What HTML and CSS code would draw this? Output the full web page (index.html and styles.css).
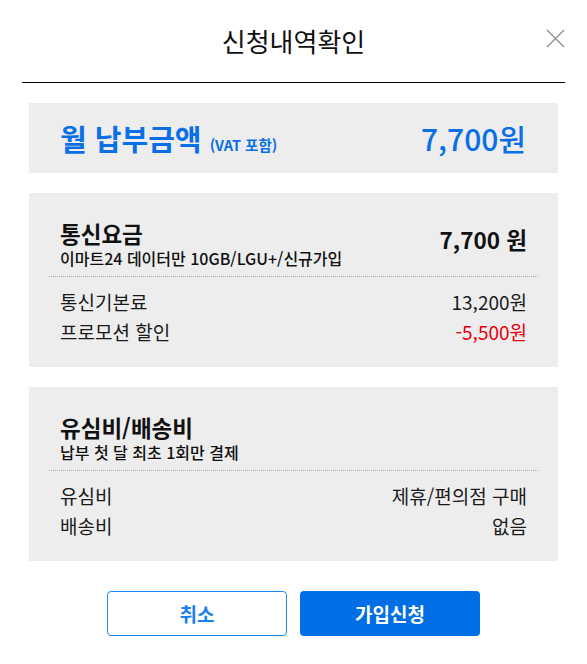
FILE: index.html
```html
<!DOCTYPE html>
<html lang="ko">
<head>
  <meta charset="UTF-8">
  <meta name="viewport" content="width=device-width, initial-scale=1.0">
  <title>신청내역확인</title>
  <link rel="stylesheet" href="styles.css">
</head>
<body>
  <div class="modal">
    <div class="modal-header">
      <h2>신청내역확인</h2>
      <button type="button" class="close-btn" aria-label="닫기">
        <svg width="19" height="19" viewBox="0 0 19 19">
          <path d="M1 1 L18 18 M18 1 L1 18" stroke="#8a8a8a" stroke-width="1.2" fill="none"/>
        </svg>
      </button>
    </div>

    <div class="total-box">
      <div class="total-label">월 납부금액 <span class="vat">(VAT 포함)</span></div>
      <div class="total-price">7,700원</div>
    </div>

    <div class="detail-box">
      <div class="detail-head">
        <div>
          <div class="detail-title">통신요금</div>
          <div class="detail-sub">이마트24 데이터만 10GB/LGU+/신규가입</div>
        </div>
        <div class="detail-price">7,700 원</div>
      </div>
      <ul class="detail-rows">
        <li><span>통신기본료</span><span>13,200원</span></li>
        <li><span>프로모션 할인</span><span class="minus">-5,500원</span></li>
      </ul>
    </div>

    <div class="detail-box">
      <div class="detail-head">
        <div>
          <div class="detail-title">유심비/배송비</div>
          <div class="detail-sub">납부 첫 달 최초 1회만 결제</div>
        </div>
      </div>
      <ul class="detail-rows">
        <li><span>유심비</span><span>제휴/편의점 구매</span></li>
        <li><span>배송비</span><span>없음</span></li>
      </ul>
    </div>

    <div class="button-container">
      <button type="button" class="btn-cancel">취소</button>
      <button type="button" class="btn-apply">가입신청</button>
    </div>
  </div>
</body>
</html>
```

FILE: styles.css
```css
body {
  margin: 0;
  font-family: "Noto Sans CJK KR", "Noto Sans", sans-serif;
  color: #111;
  background: #fff;
}
.modal {
  width: 543px;
  margin: 0 auto;
}
.modal-header {
  position: relative;
  height: 82px;
  border-bottom: 1px solid #000;
  text-align: center;
}
.modal-header h2 {
  margin: 0;
  padding-top: 24px;
  font-size: 26px;
  font-weight: 400;
  line-height: 34px;
}
.close-btn {
  position: absolute;
  top: 29px;
  right: 0;
  padding: 0;
  border: none;
  background: none;
  cursor: pointer;
  line-height: 0;
}
.total-box {
  display: flex;
  justify-content: space-between;
  align-items: center;
  height: 70px;
  margin: 20px 7px 0;
  padding: 0 32px 0 31px;
  background: #ededed;
  color: #0a6fe6;
}
.total-label {
  font-size: 29px;
  font-weight: 700;
}
.vat {
  font-size: 14.5px;
  font-weight: 700;
}
.total-price {
  font-size: 30px;
  font-weight: 500;
}
.detail-box {
  margin: 20px 7px 0;
  padding: 25px 20px 20px;
  background: #ededed;
}
.detail-head {
  display: flex;
  justify-content: space-between;
  align-items: center;
  padding: 0 11px 8px;
  border-bottom: 1px dotted #a8a8a8;
}
.detail-title {
  font-size: 22.5px;
  font-weight: 700;
  line-height: 30px;
}
.detail-sub {
  font-size: 16px;
  font-weight: 500;
  line-height: 20px;
}
.detail-price {
  margin-bottom: 8px;
  font-size: 22.5px;
  font-weight: 700;
}
.detail-rows {
  list-style: none;
  margin: 0;
  padding: 10px 11px 0;
}
.detail-rows li {
  display: flex;
  justify-content: space-between;
  font-size: 19px;
  line-height: 30px;
  color: #1a1a1a;
}
.minus {
  color: #e8000f;
}
.button-container {
  display: flex;
  justify-content: center;
  gap: 13px;
  margin-top: 30px;
}
.button-container button {
  width: 180px;
  height: 45px;
  border-radius: 4px;
  font-family: inherit;
  font-size: 19px;
  font-weight: 700;
  cursor: pointer;
}
.btn-cancel {
  border: 1px solid #1f8af5;
  background: #fff;
  color: #1a7ff0;
}
.btn-apply {
  border: none;
  background: #006fe6;
  color: #fff;
}
```
